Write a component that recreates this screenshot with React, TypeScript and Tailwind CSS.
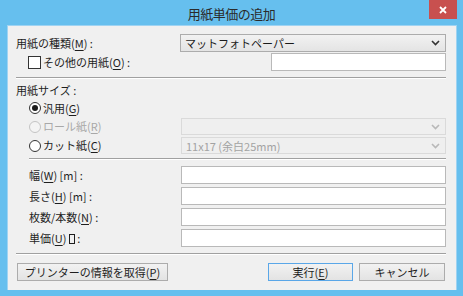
import type { ReactNode } from "react";

function Mn({ c }: { c: string }) {
  return <span className="underline underline-offset-2">{c}</span>;
}

function Chevron({ disabled }: { disabled?: boolean }) {
  return (
    <svg width="9" height="6" viewBox="0 0 9 6" className="shrink-0">
      <path
        d="M1 1 L4.5 4.5 L8 1"
        fill="none"
        stroke={disabled ? "#b8b8b8" : "#333"}
        strokeWidth="1.6"
      />
    </svg>
  );
}

function Select({ value, disabled, className }: { value?: string; disabled?: boolean; className?: string }) {
  return (
    <div
      className={
        "flex items-center justify-between pl-[4px] pr-[5px] border " +
        (disabled
          ? "border-[#dadada] bg-[#efefef] text-[#a3a3a3] "
          : "border-[#acacac] bg-gradient-to-b from-[#f2f2f2] to-[#e4e4e4] text-[#1a1a1a] ") +
        (className ?? "")
      }
    >
      <span className="whitespace-nowrap leading-[14px]">{value}</span>
      <Chevron disabled={disabled} />
    </div>
  );
}

function Field({ className }: { className?: string }) {
  return <div className={"bg-white border border-[#b9b9b9] " + (className ?? "")} />;
}

function Radio({ checked, disabled }: { checked?: boolean; disabled?: boolean }) {
  return (
    <span
      className={
        "w-[12px] h-[12px] rounded-full border flex items-center justify-center shrink-0 " +
        (disabled ? "border-[#c4c4c4] bg-[#f4f4f4]" : "border-[#333] bg-white")
      }
    >
      {checked && <span className="w-[6px] h-[6px] rounded-full bg-[#1a1a1a]" />}
    </span>
  );
}

function Sep({ className }: { className?: string }) {
  return <div className={"border-t border-[#a0a0a0] border-b border-b-white " + (className ?? "")} />;
}

function Btn({ children, className }: { children: ReactNode; className?: string }) {
  return (
    <div
      className={
        "h-[18px] flex items-center justify-center border bg-gradient-to-b from-[#f2f2f2] to-[#e3e3e3] leading-[14px] whitespace-nowrap " +
        (className ?? "")
      }
    >
      {children}
    </div>
  );
}

export default function App() {
  return (
    <div className="w-[463px] h-[296px] bg-[#66bfee] flex flex-col font-['Noto_Sans_CJK_JP',sans-serif] text-[11px] text-[#1e1e1e]">
      {/* Title bar */}
      <div className="relative h-[25px] flex items-center justify-center shrink-0">
        <span className="text-[13px] text-[#2b2b2b] tracking-[-0.5px] leading-none mt-[1px]">用紙単価の追加</span>
        <div className="absolute right-[6px] top-0 w-[28px] h-[19px] bg-[#c8504f] flex items-center justify-center">
          <svg width="8" height="8" viewBox="0 0 8 8">
            <path d="M1 1 L7 7 M7 1 L1 7" stroke="white" strokeWidth="1.8" />
          </svg>
        </div>
      </div>

      {/* Client area */}
      <div className="flex-1 ml-[7px] mr-[6px] mb-[6px] bg-[#f0f0f0] border-t border-l border-r border-[#9fd3f2] pt-[8px] pl-[8px] pr-[10px] flex flex-col">
        <div className="h-[18px] flex items-center">
          <span className="flex-1">
            用紙の種類(<Mn c="M" />) :
          </span>
          <Select value="マットフォトペーパー" className="w-[266px] h-[18px]" />
        </div>
        <div className="mt-[1px] h-[18px] flex items-center">
          <span className="ml-[12px] w-[13px] h-[13px] border border-[#333] bg-white shrink-0" />
          <span className="ml-[2px] flex-1">
            その他の用紙(<Mn c="O" />) :
          </span>
          <Field className="w-[175px] h-[18px]" />
        </div>

        <Sep className="mt-[6px]" />

        <div className="mt-[2px] h-[18px] flex items-center">用紙サイズ :</div>
        <div className="h-[18px] flex items-center">
          <span className="ml-[13px]">
            <Radio checked />
          </span>
          <span className="ml-[2px]">
            汎用(<Mn c="G" />)
          </span>
        </div>
        <div className="h-[19px] flex items-center">
          <span className="ml-[13px]">
            <Radio disabled />
          </span>
          <span className="ml-[2px] flex-1 text-[#a8a8a8]">
            ロール紙(<Mn c="R" />)
          </span>
          <Select disabled className="w-[265px] h-[17px]" />
        </div>
        <div className="h-[19px] flex items-center">
          <span className="ml-[13px]">
            <Radio />
          </span>
          <span className="ml-[2px] flex-1">
            カット紙(<Mn c="C" />)
          </span>
          <Select disabled value="11x17 (余白25mm)" className="w-[265px] h-[17px]" />
        </div>

        <Sep className="mt-[3px] ml-[13px]" />

        <div className="mt-[6px] flex flex-col gap-[3px]">
          {[
            <>幅(<Mn c="W" />) [m] :</>,
            <>長さ(<Mn c="H" />) [m] :</>,
            <>枚数/本数(<Mn c="N" />) :</>,
            <>
              単価(<Mn c="U" />){" "}
              <span className="inline-block w-[6px] h-[10px] border border-[#1e1e1e] align-[-1px]" /> :
            </>,
          ].map((label, i) => (
            <div key={i} className="h-[18px] flex items-center">
              <span className="ml-[13px] flex-1">{label}</span>
              <Field className="w-[265px] h-[18px]" />
            </div>
          ))}
        </div>

        <Sep className="mt-[6px]" />

        <div className="mt-[8px] flex items-center">
          <Btn className="ml-[1px] w-[151px] border-[#acacac]">
            プリンターの情報を取得(<Mn c="P" />)
          </Btn>
          <div className="flex-1" />
          <Btn className="w-[85px] border-[#5aa7e8]">
            実行(<Mn c="E" />)
          </Btn>
          <Btn className="ml-[6px] mr-[1px] w-[86px] border-[#acacac]">キャンセル</Btn>
        </div>
      </div>
    </div>
  );
}
